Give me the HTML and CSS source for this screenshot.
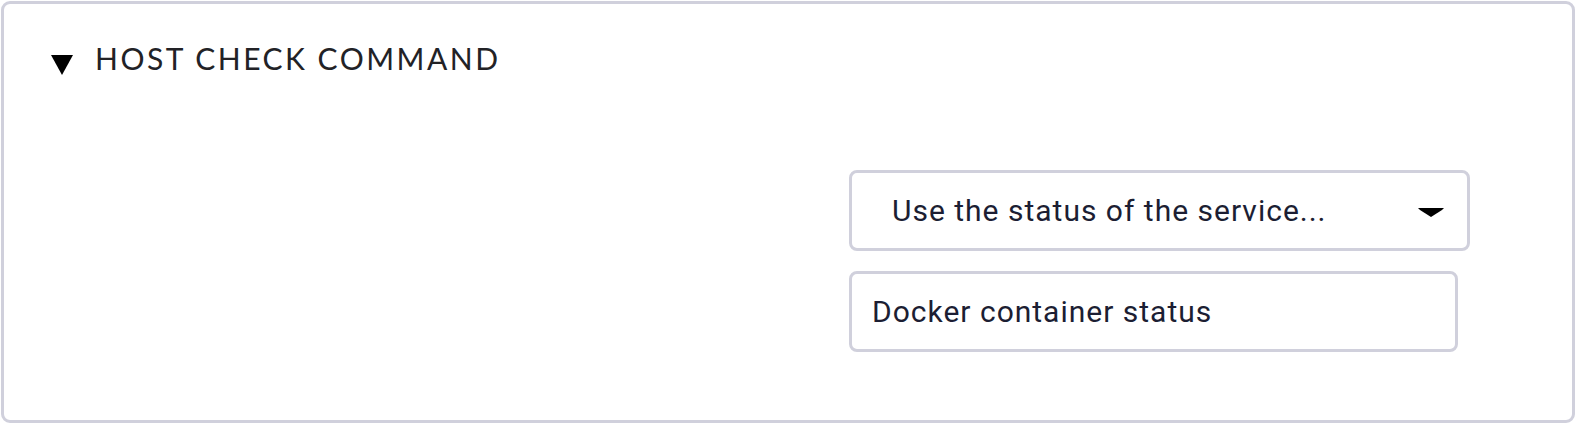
FILE: index.html
```html
<!DOCTYPE html>
<html>
<head>
<meta charset="utf-8">
<link rel="stylesheet" href="styles.css">
</head>
<body>
<div class="box">
  <div class="header">
    <svg class="toggle" width="22" height="20" viewBox="0 0 22 20"><polygon points="0,0 22,0 11,20" fill="#000"/></svg>
    <span class="title">HOST CHECK COMMAND</span>
  </div>
  <div class="row">
    <div class="label"></div>
    <div class="value">
      <div class="select">
        <span class="select-text">Use the status of the service...</span>
        <svg class="caret" width="26" height="9" viewBox="0 0 26 9"><polygon points="0,0 26,0 24,2 13,9 2,2" fill="#000"/></svg>
      </div>
      <div class="input">Docker container status</div>
    </div>
  </div>
</div>
</body>
</html>
```
FILE: styles.css
```css
html, body {
  margin: 0;
  padding: 0;
  background: #fff;
}
.box {
  margin: 1px;
  width: 1574px;
  height: 422px;
  box-sizing: border-box;
  border: 3px solid #d0d0dc;
  border-radius: 9px;
  background: #fff;
}
.header {
  display: flex;
  align-items: center;
  padding: 38px 0 0 47px;
  height: 32px;
}
.toggle {
  display: block;
  margin-top: 13px;
}
.title {
  margin-left: 22px;
  font-family: Lato, "Noto Sans", sans-serif;
  font-size: 30px;
  letter-spacing: 2.5px;
  color: #222226;
}
.row {
  display: flex;
  margin-top: 96px;
}
.label {
  width: 845px;
}
.value {
  display: flex;
  flex-direction: column;
  gap: 20px;
}
.select {
  width: 621px;
  height: 81px;
  box-sizing: border-box;
  border: 3px solid #d0d0dc;
  border-radius: 8px;
  display: flex;
  align-items: center;
  justify-content: space-between;
  padding: 0 23px 0 40px;
}
.select-text, .input {
  font-family: Roboto, "Liberation Sans", sans-serif;
  font-size: 30px;
  letter-spacing: 1px;
  color: #1c1e33;
}
.caret {
  display: block;
  margin-top: 4px;
}
.input {
  width: 609px;
  height: 81px;
  box-sizing: border-box;
  border: 3px solid #d0d0dc;
  border-radius: 8px;
  display: flex;
  align-items: center;
  padding: 0 0 0 20px;
}
```
